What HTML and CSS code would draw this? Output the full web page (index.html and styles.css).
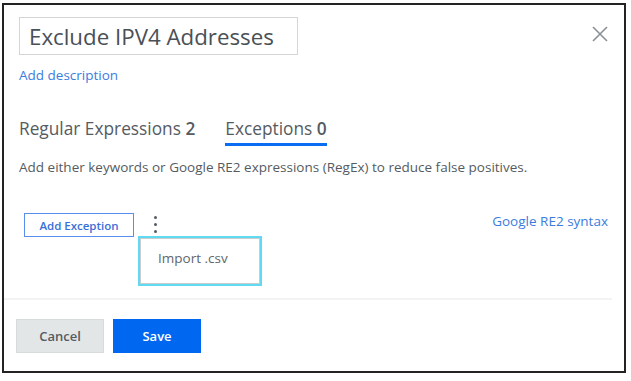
FILE: index.html
```html
<!DOCTYPE html>
<html lang="en">
<head>
    <meta charset="utf-8">
    <meta name="viewport" content="width=device-width, initial-scale=1.0">
    <title>Exclude IPV4 Addresses</title>
    <link rel="stylesheet" href="styles.css">
</head>
<body>
    <div class="dialog">
        <div class="dialog-body">
            <div class="header">
                <input class="title-input" type="text" value="Exclude IPV4 Addresses">
                <button class="close" aria-label="Close">
                    <svg width="16" height="16" viewBox="0 0 16 16">
                        <path d="M1 1 L15 15 M15 1 L1 15" stroke="#8a9196" stroke-width="1.6" fill="none"/>
                    </svg>
                </button>
            </div>
            <a class="add-desc" href="#">Add description</a>

            <div class="tabs">
                <div class="tab">Regular Expressions <b>2</b></div>
                <div class="tab active">Exceptions <b>0</b></div>
            </div>

            <p class="hint">Add either keywords or Google RE2 expressions (RegEx) to reduce false positives.</p>

            <div class="actions">
                <button class="btn-outline">Add Exception</button>
                <div class="more">
                    <span class="kebab"><i></i><i></i><i></i></span>
                    <div class="menu">
                        <div class="menu-item">Import .csv</div>
                    </div>
                </div>
                <a class="syntax" href="#">Google RE2 syntax</a>
            </div>
        </div>
        <div class="footer">
            <button class="btn btn-cancel">Cancel</button>
            <button class="btn btn-save">Save</button>
        </div>
    </div>
</body>
</html>
```

FILE: styles.css
```css
body {
    margin: 0;
    font-family: 'Open Sans', 'Noto Sans', sans-serif;
    color: #555b61;
    background: #ffffff;
}

.dialog {
    margin: 3px 0 0 2px;
    width: 624px;
    height: 370px;
    box-sizing: border-box;
    border: 2px solid #232323;
    display: flex;
    flex-direction: column;
}

.dialog-body {
    padding: 12px 4px 0 15px;
    border-bottom: 2px solid #f2f3f3;
    margin-right: 12px;
    height: 295px;
    box-sizing: border-box;
}

.header {
    display: flex;
    justify-content: space-between;
    align-items: flex-start;
}

.title-input {
    width: 279px;
    height: 38px;
    box-sizing: border-box;
    border: 1px solid #d3d5d7;
    padding: 0 10px 0 9px;
    font-family: inherit;
    font-size: 22.3px;
    color: #4a5056;
    outline: none;
}

.close {
    border: none;
    background: none;
    padding: 0;
    margin: 9px 0 0 0;
    width: 16px;
    height: 16px;
    cursor: pointer;
}

.add-desc {
    display: inline-block;
    margin-top: 11px;
    font-size: 13.5px;
    color: #3b7ddd;
    text-decoration: none;
}

.tabs {
    display: flex;
    gap: 30px;
    margin-top: 32px;
}

.tab {
    font-size: 17.3px;
    color: #555b61;
    padding-bottom: 3px;
}

.tab b {
    font-weight: 600;
}

.tab.active {
    border-bottom: 3px solid #0a6cf0;
}

.hint {
    margin: 12px 0 0;
    font-size: 13.5px;
    color: #555b61;
}

.actions {
    display: flex;
    align-items: flex-start;
    margin-top: 37px;
    padding-left: 5px;
}

.btn-outline {
    width: 110px;
    height: 24px;
    border: 1px solid #5b8def;
    background: #ffffff;
    color: #3a6fd8;
    font-family: inherit;
    font-size: 11.5px;
    font-weight: 600;
    padding: 0;
    cursor: pointer;
}

.more {
    position: relative;
    margin-left: 20px;
}

.kebab {
    display: flex;
    flex-direction: column;
    gap: 4px;
    padding-top: 3px;
}

.kebab i {
    width: 3px;
    height: 3px;
    border-radius: 50%;
    background: #555b61;
}

.menu {
    position: absolute;
    top: 23px;
    left: -16px;
    width: 124px;
    height: 50px;
    box-sizing: border-box;
    border: 2px solid #5fdaf2;
    background: #ffffff;
}

.menu-item {
    height: 100%;
    box-sizing: border-box;
    border: 1px solid #c9cbcd;
    padding: 10px 0 0 17px;
    font-size: 13.5px;
    color: #60666b;
}

.syntax {
    margin-left: auto;
    margin-top: -1px;
    font-size: 13.5px;
    color: #3b7ddd;
    text-decoration: none;
}

.footer {
    display: flex;
    gap: 9px;
    padding: 19px 0 0 12px;
}

.btn {
    width: 88px;
    height: 34px;
    font-family: inherit;
    font-size: 13px;
    font-weight: 600;
    cursor: pointer;
}

.btn-cancel {
    background: #e3e6e7;
    border: 1px solid #d8dbdc;
    color: #555b61;
}

.btn-save {
    background: #0068f0;
    border: 1px solid #0068f0;
    color: #ffffff;
}
```
